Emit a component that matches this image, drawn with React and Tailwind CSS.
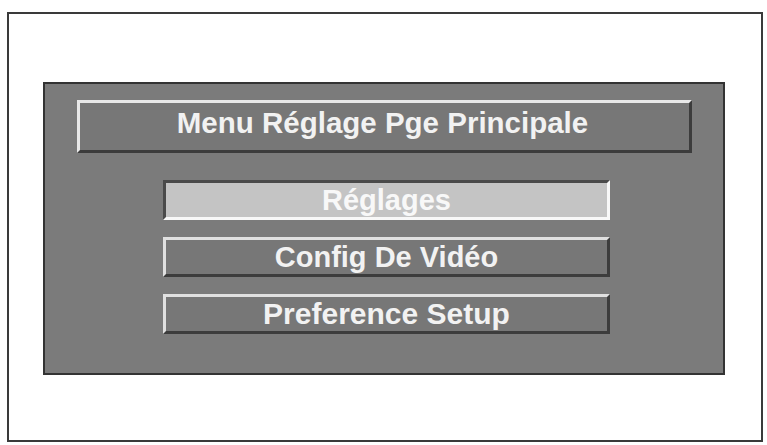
export default function App() {
  const font = { fontFamily: '"Liberation Sans", Arial, sans-serif' };
  return (
    <div className="w-[767px] h-[445px] bg-white pl-[7px] pt-[12px]" style={font}>
      <div className="w-[756px] h-[430px] border-2 border-[#3a3a3a] bg-white pl-[34px] pt-[68px]">
        <div className="w-[682px] h-[293px] border-2 border-[#333333] bg-[#7b7b7b] flex flex-col pt-[16px]">
          <div className="ml-[32px] w-[615px] h-[53px] border-[3px] border-t-[#e8e8e8] border-l-[#e8e8e8] border-b-[#3c3c3c] border-r-[#3c3c3c] bg-[#777777] flex items-center justify-center pb-2 pr-[4px] text-[29.5px] leading-none font-bold text-[#f2f2f2]">
            Menu Réglage Pge Principale
          </div>
          <div className="ml-[118px] w-[447px] mt-[27px] flex flex-col gap-[17px]">
            <div className="h-[40px] border-[3px] border-t-[#4a4a4a] border-l-[#4a4a4a] border-b-[#f8f8f8] border-r-[#f8f8f8] bg-[#c4c4c4] flex items-center justify-center text-[29px] leading-none font-bold text-[#f8f8f8]">
              Réglages
            </div>
            <div className="h-[40px] border-[3px] border-t-[#e0e0e0] border-l-[#e0e0e0] border-b-[#3c3c3c] border-r-[#3c3c3c] bg-[#777777] flex items-center justify-center text-[29px] leading-none font-bold text-[#f2f2f2]">
              Config De Vidéo
            </div>
            <div className="h-[40px] border-[3px] border-t-[#e0e0e0] border-l-[#e0e0e0] border-b-[#3c3c3c] border-r-[#3c3c3c] bg-[#777777] flex items-center justify-center text-[30px] leading-none font-bold text-[#f2f2f2]">
              Preference Setup
            </div>
          </div>
        </div>
      </div>
    </div>
  );
}
